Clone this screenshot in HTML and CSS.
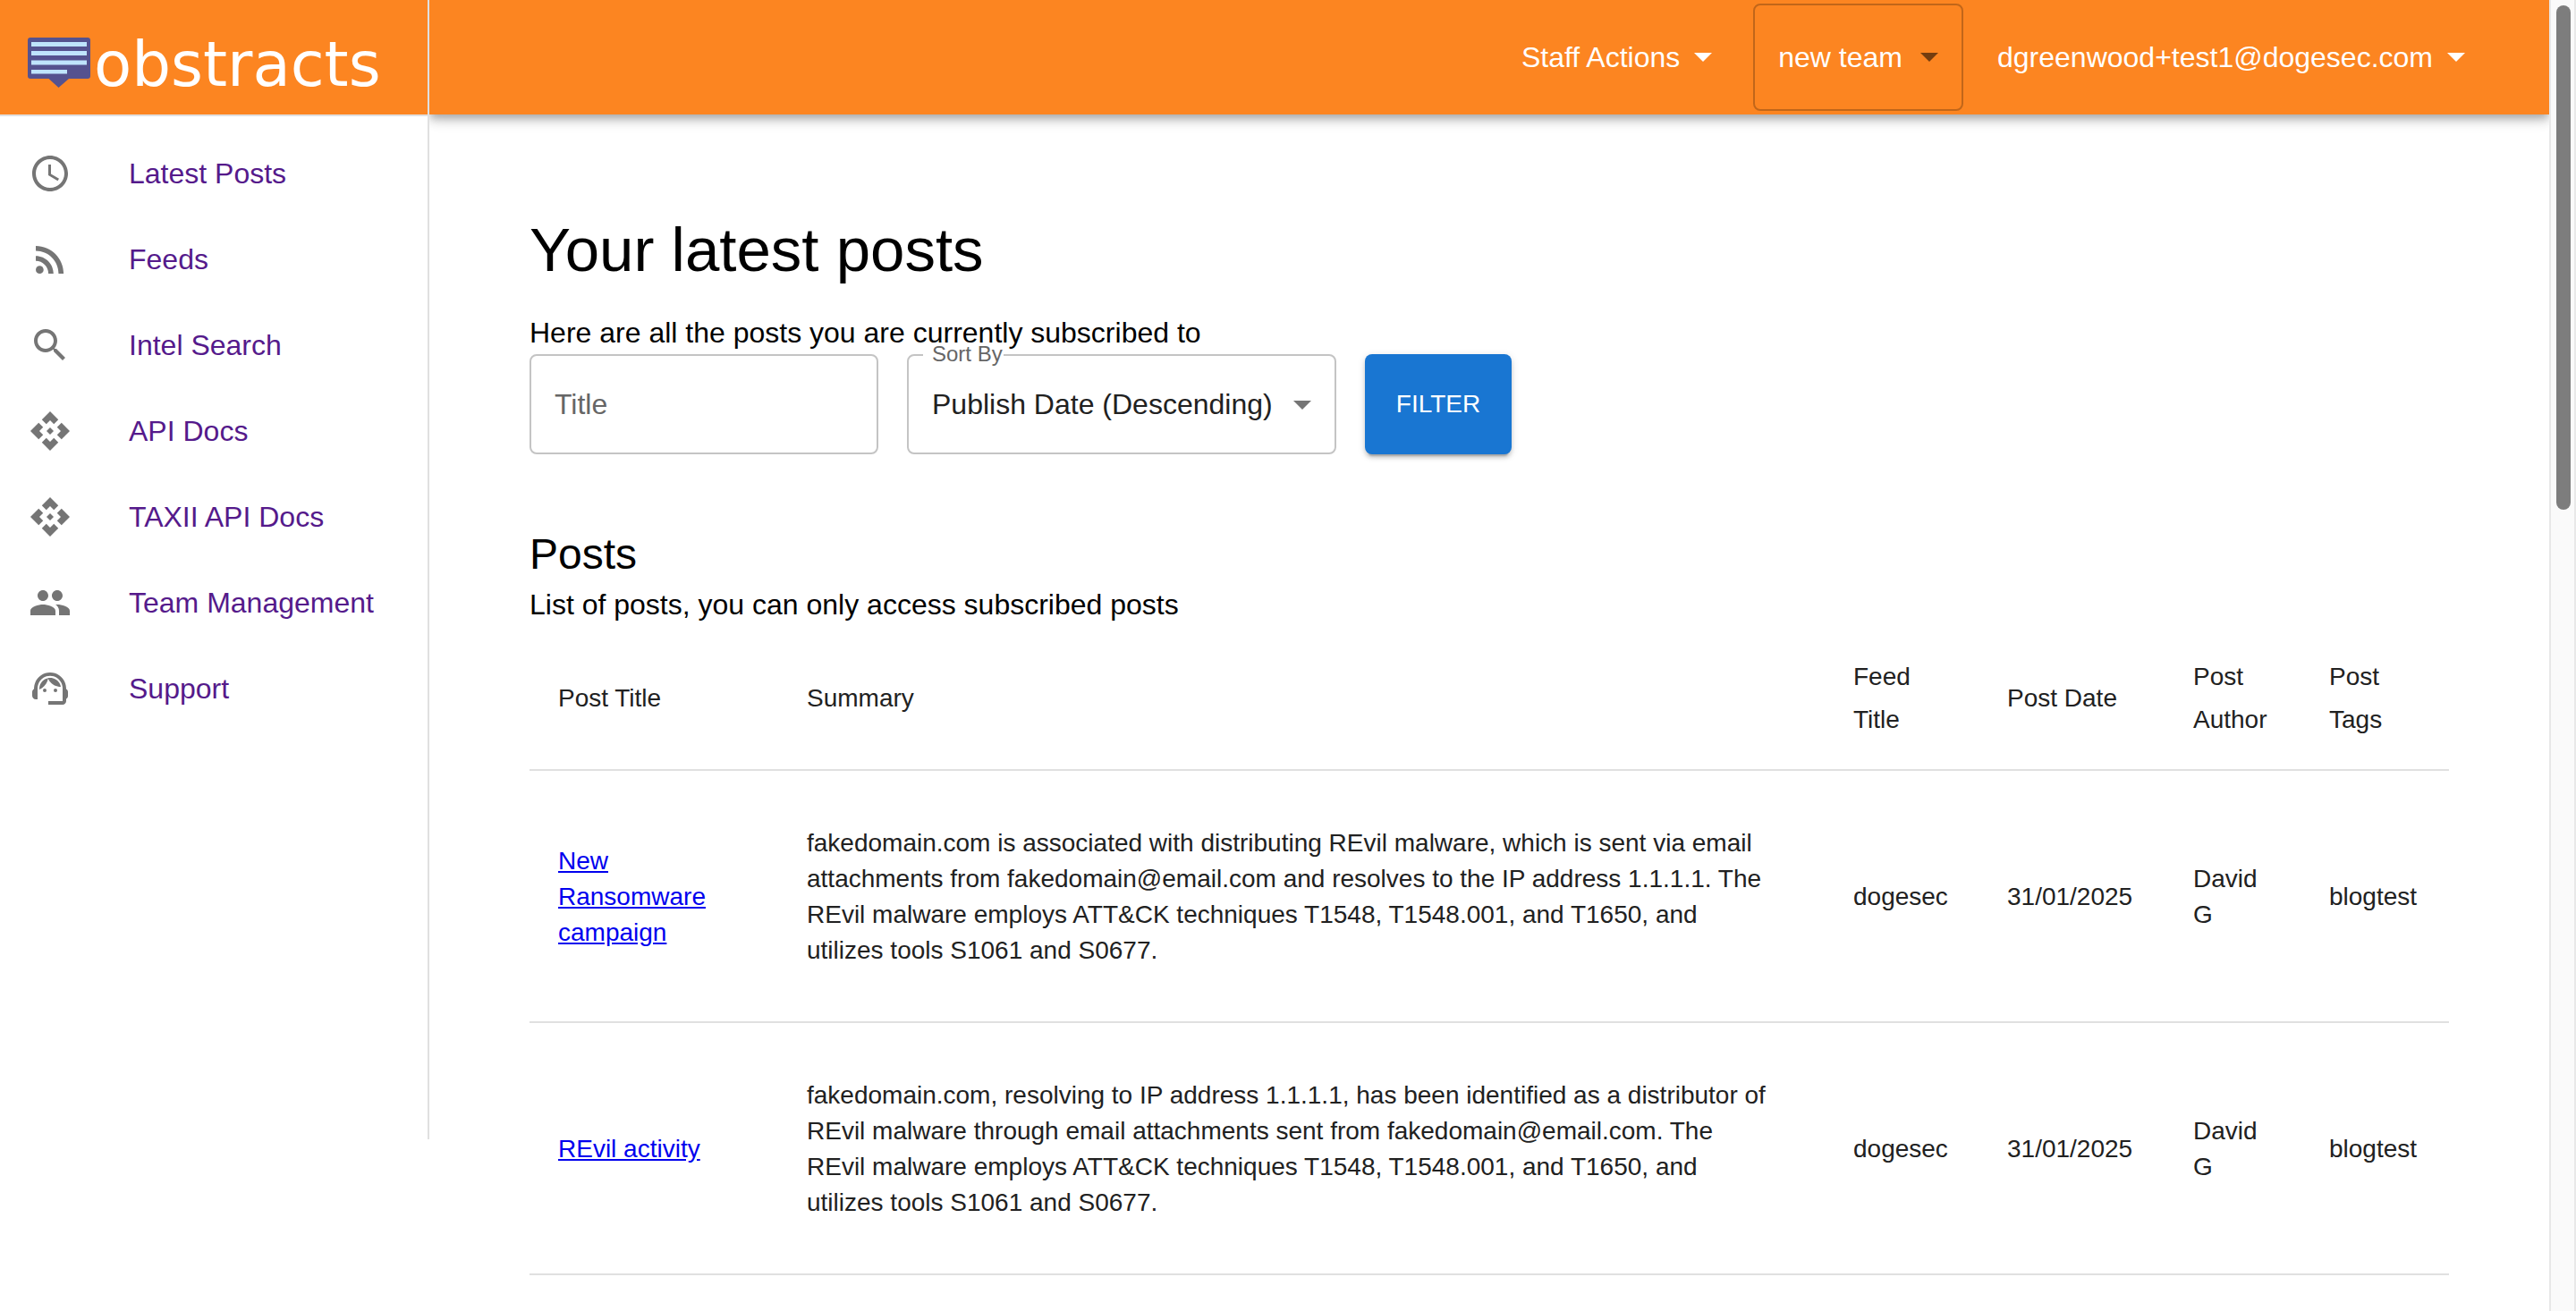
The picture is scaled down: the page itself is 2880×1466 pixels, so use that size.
FILE: index.html
```html
<!DOCTYPE html>
<html lang="en">
<head>
<meta charset="utf-8">
<title>Obstracts</title>
<link rel="stylesheet" href="styles.css">
</head>
<body>
<div class="app">
  <aside class="sidebar">
    <a class="brand" href="#">
      <svg class="brand-mark" viewBox="0 0 70 56" aria-hidden="true">
        <path fill="#55528f" d="M3 0h64a3 3 0 0 1 3 3v40a3 3 0 0 1-3 3H46L34.500 56 23.500 46H3a3 3 0 0 1-3-3V3a3 3 0 0 1 3-3z"/>
        <path fill="#bfe4fd" d="M4 5h62v5H4zM4 15h62v5H4zM4 25.500h62v5H4zM4 36h40v4.500H4z"/>
      </svg>
      <span class="brand-name">obstracts</span>
    </a>
    <nav class="menu">
      <a class="menu-item" href="#">
        <svg class="icon" viewBox="0 0 24 24" aria-hidden="true"><path d="M11.990 2C6.470 2 2 6.480 2 12s4.470 10 9.990 10C17.520 22 22 17.520 22 12S17.520 2 11.990 2zM12 20c-4.420 0-8-3.580-8-8s3.580-8 8-8 8 3.580 8 8-3.580 8-8 8zm.5-13H11v6l5.250 3.150.750-1.230-4.500-2.670z"/></svg>
        <span>Latest Posts</span>
      </a>
      <a class="menu-item" href="#">
        <svg class="icon" viewBox="0 0 24 24" aria-hidden="true"><circle cx="6.180" cy="17.820" r="2.180"/><path d="M4 4.440v2.830c7.030 0 12.730 5.700 12.730 12.730h2.830c0-8.590-6.970-15.560-15.560-15.560zm0 5.660v2.830c3.900 0 7.070 3.170 7.070 7.070h2.830c0-5.470-4.430-9.900-9.900-9.900z"/></svg>
        <span>Feeds</span>
      </a>
      <a class="menu-item" href="#">
        <svg class="icon" viewBox="0 0 24 24" aria-hidden="true"><path d="M15.500 14h-.790l-.280-.270C15.410 12.590 16 11.110 16 9.500 16 5.910 13.090 3 9.500 3S3 5.910 3 9.500 5.910 16 9.500 16c1.610 0 3.090-.590 4.230-1.570l.270.280v.790l5 4.990L20.490 19l-4.990-5zm-6 0C7.010 14 5 11.990 5 9.500S7.010 5 9.500 5 14 7.010 14 9.500 11.990 14 9.500 14z"/></svg>
        <span>Intel Search</span>
      </a>
      <a class="menu-item" href="#">
        <svg class="icon" viewBox="0 0 24 24" aria-hidden="true"><path d="m14 12-2 2-2-2 2-2 2 2zm-2-6 2.120 2.120 2.500-2.500L12 1 7.380 5.620l2.500 2.500L12 6zm-6 6 2.120-2.120-2.500-2.500L1 12l4.620 4.620 2.500-2.500L6 12zm12 0-2.120 2.120 2.500 2.500L23 12l-4.620-4.620-2.500 2.500L18 12zm-6 6-2.120-2.120-2.500 2.500L12 23l4.620-4.620-2.500-2.500L12 18z"/></svg>
        <span>API Docs</span>
      </a>
      <a class="menu-item" href="#">
        <svg class="icon" viewBox="0 0 24 24" aria-hidden="true"><path d="m14 12-2 2-2-2 2-2 2 2zm-2-6 2.120 2.120 2.500-2.500L12 1 7.380 5.620l2.500 2.500L12 6zm-6 6 2.120-2.120-2.500-2.500L1 12l4.620 4.620 2.500-2.500L6 12zm12 0-2.120 2.120 2.500 2.500L23 12l-4.620-4.620-2.500 2.500L18 12zm-6 6-2.120-2.120-2.500 2.500L12 23l4.620-4.620-2.500-2.500L12 18z"/></svg>
        <span>TAXII API Docs</span>
      </a>
      <a class="menu-item" href="#">
        <svg class="icon" viewBox="0 0 24 24" aria-hidden="true"><path d="M16 11c1.660 0 2.990-1.340 2.990-3S17.660 5 16 5c-1.660 0-3 1.340-3 3s1.340 3 3 3zm-8 0c1.660 0 2.990-1.340 2.990-3S9.660 5 8 5C6.340 5 5 6.340 5 8s1.340 3 3 3zm0 2c-2.330 0-7 1.170-7 3.500V19h14v-2.500c0-2.330-4.670-3.500-7-3.500zm8 0c-.290 0-.620.020-.970.050 1.160.840 1.970 1.970 1.970 3.450V19h6v-2.500c0-2.330-4.670-3.500-7-3.500z"/></svg>
        <span>Team Management</span>
      </a>
      <a class="menu-item" href="#">
        <svg class="icon" viewBox="0 0 24 24" aria-hidden="true"><path d="M21 12.220C21 6.730 16.740 3 12 3c-4.690 0-9 3.650-9 9.280-.6.340-1 .980-1 1.720v2c0 1.100.9 2 2 2h1v-6.100c0-3.870 3.130-7 7-7s7 3.130 7 7V19h-8v2h8c1.100 0 2-.9 2-2v-1.220c.590-.310 1-.920 1-1.640v-2.300c0-.7-.410-1.310-1-1.620z"/><circle cx="9" cy="13" r="1"/><circle cx="15" cy="13" r="1"/><path d="M18 11.030C17.520 8.180 15.040 6 12.050 6c-3.030 0-6.290 2.510-6.030 6.450 2.470-1.010 4.330-3.210 4.860-5.890 1.310 2.630 4 4.440 7.120 4.470z"/></svg>
        <span>Support</span>
      </a>
    </nav>
  </aside>

  <div class="page">
    <header class="topbar">
      <button class="top-button" type="button">Staff Actions <svg class="caret" viewBox="0 0 20 10" aria-hidden="true"><path d="M0 0h20L10 10z"/></svg></button>
      <button class="top-button top-button-team" type="button">new team <svg class="caret" viewBox="0 0 20 10" aria-hidden="true"><path d="M0 0h20L10 10z"/></svg></button>
      <button class="top-button" type="button">dgreenwood+test1@dogesec.com <svg class="caret" viewBox="0 0 20 10" aria-hidden="true"><path d="M0 0h20L10 10z"/></svg></button>
    </header>

    <main class="content">
      <h1 class="title">Your latest posts</h1>
      <p class="text">Here are all the posts you are currently subscribed to</p>
      <form class="filters">
        <div class="field field-title">
          <input class="control" id="title" type="text">
          <label class="field-label" for="title">Title</label>
        </div>
        <div class="field field-sort">
          <select class="control control-select" id="sort">
            <option>Publish Date (Descending)</option>
            <option>Publish Date (Ascending)</option>
          </select>
          <fieldset class="outline" aria-hidden="true"><legend class="notch"></legend></fieldset>
          <label class="float-label" for="sort">Sort By</label>
          <svg class="caret select-caret" viewBox="0 0 20 10" aria-hidden="true"><path d="M0 0h20L10 10z"/></svg>
        </div>
        <button class="filter-button" type="button">FILTER</button>
      </form>

      <h2 class="subtitle">Posts</h2>
      <p class="text">List of posts, you can only access subscribed posts</p>
      <table class="posts">
        <colgroup>
          <col class="col-title"><col><col class="col-feed"><col class="col-date"><col class="col-author"><col class="col-tags">
        </colgroup>
        <thead>
          <tr><th>Post Title</th><th>Summary</th><th>Feed Title</th><th>Post Date</th><th>Post Author</th><th>Post Tags</th></tr>
        </thead>
        <tbody>
          <tr>
            <td><a href="#">New Ransomware campaign</a></td>
            <td class="summary">fakedomain.com is associated with distributing REvil malware, which is sent via email attachments from fakedomain@email.com and resolves to the IP address 1.1.1.1. The REvil malware employs ATT&amp;CK techniques T1548, T1548.001, and T1650, and utilizes tools S1061 and S0677.</td>
            <td>dogesec</td><td>31/01/2025</td><td>David G</td><td>blogtest</td>
          </tr>
          <tr>
            <td><a href="#">REvil activity</a></td>
            <td class="summary">fakedomain.com, resolving to IP address 1.1.1.1, has been identified as a distributor of REvil malware through email attachments sent from fakedomain@email.com. The REvil malware employs ATT&amp;CK techniques T1548, T1548.001, and T1650, and utilizes tools S1061 and S0677.</td>
            <td>dogesec</td><td>31/01/2025</td><td>David G</td><td>blogtest</td>
          </tr>
        </tbody>
      </table>
    </main>
  </div>

  <div class="scroll-track" aria-hidden="true"><div class="scroll-thumb"></div></div>
</div>
</body>
</html>
```
FILE: styles.css
```css
* {
  box-sizing: border-box;
}

body {
  margin: 0;
  background: #fff;
  color: #000;
  font-family: "Liberation Sans", Arial, Helvetica, sans-serif;
  font-size: 32px;
  line-height: 48px;
}

button,
input,
select {
  font: inherit;
}

.app {
  display: flex;
  min-height: 100vh;
}

/* Sidebar */
.sidebar {
  position: relative;
  z-index: 2;
  flex: 0 0 480px;
  height: calc(100vh - 192px);
  border-right: 2px solid #e0e0e0;
  background: #fff;
}

.brand {
  display: flex;
  align-items: flex-end;
  gap: 4px;
  height: 130px;
  padding: 0 0 30px 31px;
  border-bottom: 2px solid #e0e0e0;
  background: #fc8521;
  color: #fff;
  text-decoration: none;
}

.brand-mark {
  width: 70px;
  height: 56px;
}

.brand-name {
  font-family: "DejaVu Sans", Verdana, sans-serif;
  font-size: 69px;
  line-height: 52px;
}

.menu {
  display: flex;
  flex-direction: column;
  padding-top: 16px;
}

.menu-item {
  display: flex;
  align-items: center;
  gap: 64px;
  height: 96px;
  padding-left: 32px;
  color: #551a8b;
  text-decoration: none;
}

.icon {
  width: 48px;
  height: 48px;
  fill: #757575;
}

/* Top bar */
.page {
  flex: 1;
  min-width: 0;
}

.topbar {
  display: flex;
  align-items: center;
  justify-content: flex-end;
  gap: 16px;
  height: 128px;
  padding-right: 78px;
  background: #fc8521;
  box-shadow: 0 4px 8px -2px rgba(0, 0, 0, 0.2), 0 8px 10px 0 rgba(0, 0, 0, 0.14), 0 2px 20px 0 rgba(0, 0, 0, 0.12);
}

.top-button {
  display: flex;
  align-items: center;
  gap: 16px;
  padding: 0 16px;
  border: 0;
  background: none;
  color: #fff;
}

.top-button-team {
  height: 120px;
  margin: 0 6px 0 14px;
  padding: 0 26px;
  gap: 20px;
  border: 2px solid rgba(0, 0, 0, 0.23);
  border-radius: 8px;
}

.caret {
  width: 20px;
  height: 10px;
  fill: currentColor;
}

.top-button-team .caret {
  fill: rgba(0, 0, 0, 0.54);
}

/* Content */
.content {
  padding: 110px 112px 0;
}

.title,
.subtitle,
.text {
  margin: 0;
  font-weight: 400;
}

.title {
  margin-bottom: 26px;
  font-size: 69px;
  line-height: 84px;
}

.subtitle {
  margin-top: 80px;
  font-size: 48px;
  line-height: 64px;
}

.filters {
  display: flex;
  gap: 32px;
}

.field {
  position: relative;
  height: 112px;
}

.field-title {
  width: 390px;
}

.field-sort {
  width: 480px;
}

.control {
  width: 100%;
  height: 100%;
  padding: 0 26px;
  border: 2px solid #c4c4c4;
  border-radius: 8px;
  background: none;
  color: #212121;
}

.control-select {
  appearance: none;
  border-color: transparent;
}

.field-label {
  position: absolute;
  top: 32px;
  left: 28px;
  color: #666;
}

.outline {
  position: absolute;
  inset: -10px 0 0;
  margin: 0;
  padding: 0 16px;
  border: 2px solid #c4c4c4;
  border-radius: 8px;
  pointer-events: none;
}

.notch {
  width: 90px;
  height: 22px;
  padding: 0;
}

.float-label {
  position: absolute;
  top: -16px;
  left: 28px;
  color: #666;
  font-size: 24px;
  line-height: 32px;
}

.select-caret {
  position: absolute;
  top: 52px;
  right: 28px;
  color: #757575;
  pointer-events: none;
}

.filter-button {
  min-width: 164px;
  padding: 0 32px;
  border: 0;
  border-radius: 8px;
  background: #1976d2;
  box-shadow: 0 6px 2px -4px rgba(0, 0, 0, 0.2), 0 4px 4px 0 rgba(0, 0, 0, 0.14), 0 2px 10px 0 rgba(0, 0, 0, 0.12);
  color: #fff;
  font-size: 28px;
}

/* Posts table */
.posts {
  width: 100%;
  border-collapse: separate;
  border-spacing: 0;
  table-layout: fixed;
  color: #212121;
  font-size: 28px;
  line-height: 40px;
}

.col-title {
  width: 278px;
}

.col-feed {
  width: 172px;
}

.col-date {
  width: 208px;
}

.col-author {
  width: 152px;
}

.col-tags {
  width: 166px;
}

.posts th,
.posts td {
  padding: 61px 32px 59px;
  border-bottom: 2px solid #e0e0e0;
  text-align: left;
  vertical-align: middle;
}

.posts th {
  padding: 33px 32px 31px;
  font-weight: 400;
  line-height: 48px;
}

.posts .summary {
  padding-right: 56px;
}

.posts a {
  color: #00e;
}

/* Scrollbar */
.scroll-track {
  flex: 0 0 30px;
  padding: 6px 4px 0 6px;
  border: solid #e8e8e8;
  border-width: 0 2px;
  background: #fafafa;
}

.scroll-thumb {
  width: 16px;
  height: 564px;
  border-radius: 8px;
  background: #7d7d7d;
}
```
